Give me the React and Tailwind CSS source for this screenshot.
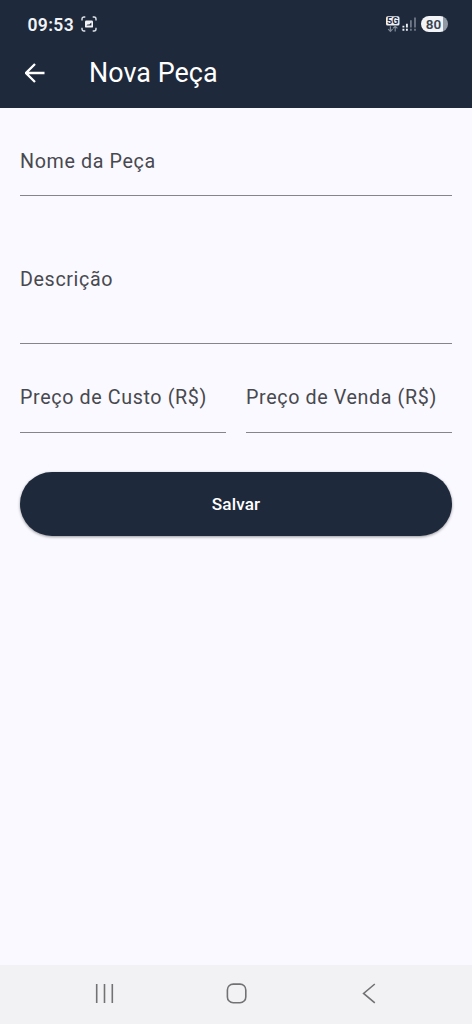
function CaptureIcon() {
  return (
    <svg className="ml-[6.5px] size-4" viewBox="0 0 16 16" fill="none">
      <path d="M1 4.6V3a2 2 0 0 1 2-2h1.3M11.7 1H13a2 2 0 0 1 2 2v1.6M15 11.7V13a2 2 0 0 1-2 2h-1.3M4.3 15H3a2 2 0 0 1-2-2v-1.3" stroke="#dfe3e9" strokeWidth="1.4" />
      <rect x="4" y="4.6" width="8" height="7" rx="1.2" fill="#f1f3f6" />
      <path d="M5.4 9.6l1.6-1.4 1 .6 2.4-2.2v3z" fill="#1e293b" />
    </svg>
  );
}

function NetworkIcon() {
  return (
    <svg className="h-[18px] w-[31px]" viewBox="0 0 31 18">
      <rect x="0" y="1.3" width="13.5" height="9.2" rx="1.6" fill="#eceff3" />
      <text x="6.75" y="9.1" textAnchor="middle" fontFamily="Roboto, sans-serif" fontSize="9" fontWeight="700" fill="#1e293b">5G</text>
      <path d="M4.4 11.2v5.2M2.2 14.2l2.2 2.2 2.2-2.2M9.2 16.6v-5.2M7 13.4l2.2-2.2 2.2 2.2" fill="none" stroke="#7f8896" strokeWidth="1.2" />
      <path d="M17.4 10.8v1.8M17.4 13.8v2M20.9 8.8v3.8M20.9 13.8v2" stroke="#eceff3" strokeWidth="1.9" />
      <path d="M24.9 5.2v7.4M24.9 13.8v2M29 2.4v10.2M29 13.8v2" stroke="#6f7987" strokeWidth="1.8" />
    </svg>
  );
}

function Field({ label, className }) {
  return (
    <label className={`block min-w-0 flex-1 border-b border-[#85858b] text-[19.7px] leading-6 tracking-[0.62px] whitespace-nowrap text-[#48494f] ${className}`}>
      {label}
    </label>
  );
}

export default function App() {
  return (
    <div className="flex h-screen w-full flex-col overflow-hidden bg-[#faf9ff] font-[Roboto,sans-serif]">
      <header className="h-[107.5px] shrink-0 bg-[#1e293b] text-white">
        <div className="flex h-12 items-center justify-between pr-6 pl-[27.5px] text-[#f1f3f6]">
          <div className="flex items-center">
            <span className="w-[47px] pt-0.5 text-[17.5px] leading-5 font-semibold tracking-[0.35px]">09:53</span>
            <CaptureIcon />
          </div>
          <div className="flex items-center gap-1">
            <NetworkIcon />
            <span className="flex h-4 w-[27px] items-center justify-center rounded-full bg-linear-to-r from-[#f1f3f6] from-80% to-[#9199a5] to-80% pt-px pr-0.5 text-[13.5px] leading-none font-semibold text-[#3a4352]">80</span>
          </div>
        </div>
        <div className="flex h-[50px] items-center pl-[25px]">
          <svg className="size-5" viewBox="0 0 20 20" fill="none" stroke="currentColor" strokeWidth="2.3">
            <path d="M19.5 10H1.5M10 1L1 10l9 9" />
          </svg>
          <h1 className="ml-11 text-[26.9px] leading-8 font-normal tracking-[0.05px]">Nova Peça</h1>
        </div>
      </header>
      <main className="flex flex-1 flex-col px-5">
        <div className="flex"><Field label="Nome da Peça" className="mt-[42.5px] h-[46px]" /></div>
        <div className="flex"><Field label="Descrição" className="mt-[72px] h-[76px]" /></div>
        <div className="flex gap-5">
          <Field label="Preço de Custo (R$)" className="mt-[42px] h-[47px]" />
          <Field label="Preço de Venda (R$)" className="mt-[42px] h-[47px]" />
        </div>
        <button className="mt-[39px] h-16 rounded-full bg-[#1e293b] pt-0.5 text-[17.2px] font-medium tracking-[0.12px] text-white shadow-[0_1px_3px_rgba(0,0,0,0.4)]">Salvar</button>
      </main>
      <nav className="h-[59px] shrink-0 bg-[#f2f2f4]">
        <svg className="h-full w-full" viewBox="0 0 472 59" fill="none" stroke="#727274" strokeWidth="1.6">
          <path d="M96.7 19v19M104.5 19v19M112.3 19v19" />
          <rect x="227.4" y="19.1" width="18.4" height="18.6" rx="5.8" />
          <path d="M374.8 19l-11.2 9.4 11.2 9.4" />
        </svg>
      </nav>
    </div>
  );
}
